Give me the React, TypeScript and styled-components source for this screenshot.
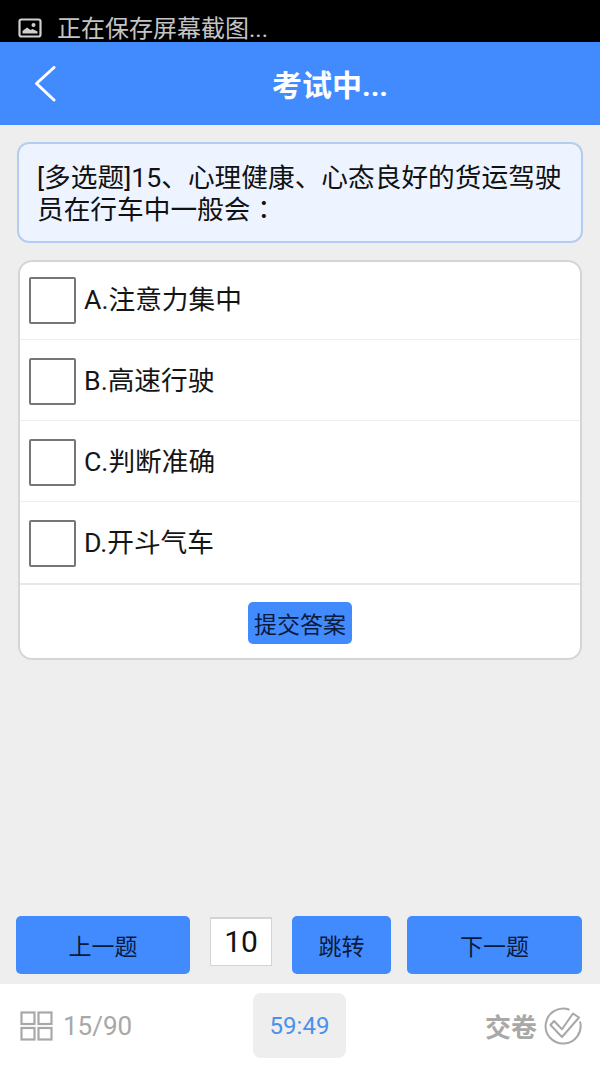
import { FC } from 'react';
import styled, { createGlobalStyle } from 'styled-components';

const FONT = `Roboto, 'Noto Sans CJK SC', sans-serif`;

const GlobalStyle = createGlobalStyle`
  html, body {
    margin: 0;
    padding: 0;
    background: #eeeeee;
    font-family: ${FONT};
  }
  * {
    box-sizing: border-box;
  }
`;

const OPTIONS = ['A.注意力集中', 'B.高速行驶', 'C.判断准确', 'D.开斗气车'];

const ScreenshotIcon: FC = () => (
  <svg width="24" height="21" viewBox="0 0 24 21" fill="none">
    <rect x="1.5" y="1.5" width="21" height="17" rx="2" stroke="#d0d0d0" strokeWidth="2.2" />
    <path d="M4.5 15.5v-2.5l4.5-3.5 3.5 2.5 2-1 5 2.5v2z" fill="#d0d0d0" />
    <circle cx="15.5" cy="7" r="2" fill="#d0d0d0" />
  </svg>
);

const BackIcon: FC = () => (
  <svg width="24" height="38" viewBox="0 0 24 38" fill="none">
    <path d="M21 1.5L3.5 17.5 21 34" stroke="#ffffff" strokeWidth="3" strokeLinecap="round" strokeLinejoin="round" />
  </svg>
);

const GridIcon: FC = () => (
  <svg width="33" height="30" viewBox="0 0 33 30" fill="none" stroke="#a8a8a8" strokeWidth="2.2">
    <rect x="1.5" y="1.5" width="13" height="11.5" />
    <rect x="18.5" y="1.5" width="13" height="11.5" />
    <rect x="1.5" y="17" width="13" height="11.5" />
    <rect x="18.5" y="17" width="13" height="11.5" />
  </svg>
);

const SubmitIcon: FC = () => (
  <svg width="38" height="38" viewBox="0 0 38 38" fill="none" stroke="#a8a8a8" strokeWidth="2">
    <path d="M25.5 2.8A17.5 17.5 0 1 0 36 14.5" />
    <path d="M6.5 18L10 14l8 8.2L29 6.5l6 4L18 30z" strokeLinejoin="round" />
  </svg>
);

export default function App() {
  return (
    <Page>
      <GlobalStyle />
      <StatusBar>
        <ScreenshotIcon />
        <StatusText>正在保存屏幕截图...</StatusText>
      </StatusBar>
      <Header>
        <BackButton>
          <BackIcon />
        </BackButton>
        <Title>考试中...</Title>
      </Header>
      <Content>
        <Question>
          <QuestionLine>[多选题]15、心理健康、心态良好的货运驾驶</QuestionLine>
          <QuestionLine>
            员在行车中一般会<Colon>：</Colon>
          </QuestionLine>
        </Question>
        <OptionCard>
          {OPTIONS.map((option) => (
            <OptionRow key={option}>
              <CheckBox />
              <OptionLabel>{option}</OptionLabel>
            </OptionRow>
          ))}
          <SubmitRow>
            <SubmitButton>提交答案</SubmitButton>
          </SubmitRow>
        </OptionCard>
      </Content>
      <NavBar>
        <NavButton $width={174}>上一题</NavButton>
        <JumpInput>10</JumpInput>
        <NavButton $width={99}>跳转</NavButton>
        <NavButton $width={175}>下一题</NavButton>
      </NavBar>
      <Footer>
        <Progress>
          <GridIcon />
          <ProgressText>15/90</ProgressText>
        </Progress>
        <Timer>59:49</Timer>
        <HandIn>
          <HandInText>交卷</HandInText>
          <SubmitIcon />
        </HandIn>
      </Footer>
    </Page>
  );
}

const Page = styled.div`
  width: 600px;
  height: 1067px;
  display: flex;
  flex-direction: column;
  background: #eeeeee;
  overflow: hidden;
`;
const StatusBar = styled.div`
  height: 42px;
  flex: none;
  display: flex;
  align-items: center;
  gap: 15px;
  padding: 15px 0 0 18px;
  background: #000000;
`;
const StatusText = styled.span`
  font-size: 24px;
  line-height: 28px;
  color: #c4c4c4;
`;
const Header = styled.div`
  height: 83px;
  flex: none;
  display: flex;
  align-items: center;
  justify-content: center;
  position: relative;
  padding-left: 60px;
  background: #428bff;
`;
const BackButton = styled.div`
  position: absolute;
  left: 33px;
  top: 24px;
  display: flex;
`;
const Title = styled.h1`
  margin: 0 0 2px;
  font-size: 30px;
  font-weight: 700;
  color: #ffffff;
`;
const Content = styled.div`
  flex: 1;
  display: flex;
  flex-direction: column;
  gap: 17px;
  padding: 17px 17px 0;
`;
const Question = styled.div`
  height: 101px;
  padding: 18px 14px 0 18px;
  font-size: 26.7px;
  line-height: 32px;
  color: #111111;
  background: #edf4ff;
  border: 2px solid #b3cdf2;
  border-radius: 12px;
`;
const QuestionLine = styled.div`
  white-space: nowrap;
`;
const Colon = styled.span`
  font-family: Roboto, 'Noto Sans CJK TC', sans-serif;
`;
const OptionCard = styled.div`
  height: 400px;
  margin: 0 1px;
  display: flex;
  flex-direction: column;
  background: #ffffff;
  border: 2px solid #d5d5d5;
  border-radius: 14px;
`;
const OptionRow = styled.div`
  height: 81px;
  flex: none;
  display: flex;
  align-items: flex-end;
  gap: 8px;
  padding: 0 0 15px 9px;
  border-bottom: 1px solid #eeeeee;
  &:first-child {
    height: 78px;
  }
  &:nth-of-type(4) {
    height: 83px;
    padding-bottom: 16px;
    border-bottom: 2px solid #e8e8e8;
  }
`;
const CheckBox = styled.div`
  width: 47px;
  height: 47px;
  background: #ffffff;
  border: 2px solid #767676;
  border-radius: 2px;
`;
const OptionLabel = styled.span`
  font-size: 26.7px;
  line-height: 47px;
  color: #151515;
`;
const SubmitRow = styled.div`
  flex: 1;
  display: flex;
  align-items: center;
  justify-content: center;
  padding-top: 3px;
`;
const SubmitButton = styled.div`
  width: 104px;
  height: 42px;
  display: flex;
  align-items: center;
  justify-content: center;
  font-size: 23px;
  color: #0a1a3a;
  background: #428bff;
  border-radius: 5px;
`;
const NavBar = styled.div`
  height: 68px;
  flex: none;
  display: flex;
  align-items: flex-start;
  padding-left: 16px;
`;
const NavButton = styled.div<{ $width: number }>`
  width: ${(p) => p.$width}px;
  height: 58px;
  display: flex;
  align-items: center;
  justify-content: center;
  font-size: 23px;
  color: #0a1a3a;
  background: #428bff;
  border-radius: 5px;
  & + & {
    margin-left: 16px;
  }
`;
const JumpInput = styled.div`
  width: 62px;
  height: 49px;
  margin: 1px 20px 0;
  padding-bottom: 2px;
  display: flex;
  align-items: center;
  justify-content: center;
  font-size: 30px;
  color: #111111;
  background: #ffffff;
  border: 1px solid #d4d4d4;
  border-top-width: 2px;
`;
const Footer = styled.div`
  height: 83px;
  flex: none;
  display: flex;
  align-items: center;
  justify-content: space-between;
  padding: 0 18px 0 20px;
  position: relative;
  background: #ffffff;
`;
const Progress = styled.div`
  display: flex;
  align-items: center;
  gap: 10px;
`;
const ProgressText = styled.span`
  font-size: 26px;
  color: #a8a8a8;
`;
const Timer = styled.div`
  position: absolute;
  left: 253px;
  top: 9px;
  width: 93px;
  height: 65px;
  display: flex;
  align-items: center;
  justify-content: center;
  font-size: 24px;
  color: #4a90ec;
  background: #eeeeee;
  border-radius: 8px;
`;
const HandIn = styled.div`
  display: flex;
  align-items: center;
  gap: 7px;
`;
const HandInText = styled.span`
  font-size: 26px;
  font-weight: 700;
  color: #a8a8a8;
`;
